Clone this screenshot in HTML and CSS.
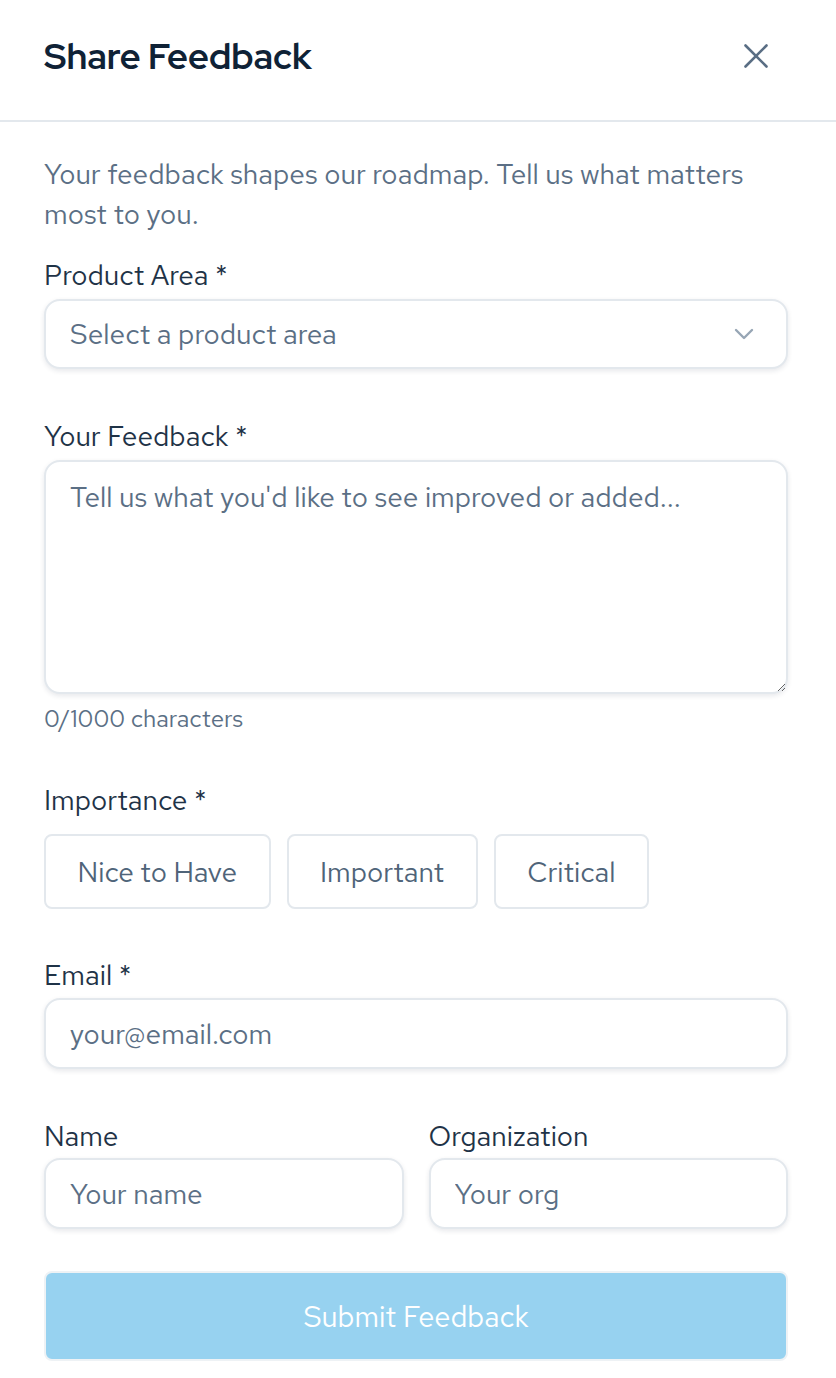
FILE: index.html
```html
<!DOCTYPE html>
<html lang="en">
<head>
<meta charset="utf-8">
<title>Share Feedback</title>
<link rel="stylesheet" href="styles.css">
</head>
<body>
<div class="panel">
  <header class="header">
    <h1 class="title">Share Feedback</h1>
    <button class="close" aria-label="Close">
      <svg width="24" height="24" viewBox="0 0 24 24" fill="none" stroke="currentColor" stroke-width="2.6" stroke-linecap="round"><path d="M1.5 1.5L22.5 22.5M22.5 1.5L1.5 22.5"/></svg>
    </button>
  </header>
  <main class="body">
    <p class="desc">Your feedback shapes our roadmap. Tell us what matters most to you.</p>
    <form class="form">
      <div class="field">
        <label class="label">Product Area *</label>
        <div class="control select">
          <span class="placeholder">Select a product area</span>
          <svg class="chevron" width="20" height="12" viewBox="0 0 20 12" fill="none" stroke="currentColor" stroke-width="2.4" stroke-linecap="round" stroke-linejoin="round"><path d="M2 2L10 10L18 2"/></svg>
        </div>
      </div>
      <div class="field">
        <label class="label">Your Feedback *</label>
        <textarea class="control textarea" placeholder="Tell us what you'd like to see improved or added..."></textarea>
        <div class="counter">0/1000 characters</div>
      </div>
      <div class="field field-importance">
        <label class="label label-gap">Importance *</label>
        <div class="choices">
          <button type="button" class="choice">Nice to Have</button>
          <button type="button" class="choice">Important</button>
          <button type="button" class="choice">Critical</button>
        </div>
      </div>
      <div class="field field-email">
        <label class="label label-email">Email *</label>
        <input class="control input" type="email" placeholder="your@email.com">
      </div>
      <div class="row">
        <div class="field">
          <label class="label label-tight">Name</label>
          <input class="control input" type="text" placeholder="Your name">
        </div>
        <div class="field">
          <label class="label label-tight">Organization</label>
          <input class="control input" type="text" placeholder="Your org">
        </div>
      </div>
      <button type="button" class="submit">Submit Feedback</button>
    </form>
  </main>
</div>
</body>
</html>
```
FILE: styles.css
```css
* { box-sizing: border-box; }
html, body { margin: 0; padding: 0; background: #ffffff; }
body {
  font-family: "Red Hat Text", Inter, "Open Sans", sans-serif;
  color: #1f3347;
}
.panel { width: 836px; }
.header {
  height: 122px;
  border-bottom: 2px solid #e3e8ed;
  display: flex;
  align-items: center;
  justify-content: space-between;
  padding: 0 68px 8px 44px;
}
.title {
  margin: 0;
  font-family: "Red Hat Display", Inter, sans-serif;
  font-size: 36px;
  font-weight: 700;
  color: #0f2236;
}
.close {
  border: 0;
  background: none;
  padding: 0;
  color: #5a6e84;
  display: flex;
}
.body { padding: 32px 48px 0 44px; }
.desc {
  margin: 0 0 23px;
  font-size: 28px;
  line-height: 40px;
  color: #5b6f85;
}
.form { display: flex; flex-direction: column; gap: 49px; }
.field { display: flex; flex-direction: column; }
.field-importance { margin-top: -1px; }
.field-email { margin-top: -1px; }
.label {
  font-size: 28px;
  line-height: 36px;
  margin-bottom: 6px;
  color: #1f3347;
}
.label-gap { margin-bottom: 16px; }
.label-email { margin-bottom: 5px; }
.label-tight { margin-bottom: 4px; }
.control {
  border: 2px solid #e3e8ed;
  border-radius: 16px;
  background: #fff;
  box-shadow: 0 2px 5px rgba(15, 34, 54, 0.1);
  font-family: inherit;
  font-size: 28px;
  color: #1f3347;
}
.control::placeholder { color: #5b6f85; opacity: 1; }
.select {
  height: 70px;
  display: flex;
  align-items: center;
  justify-content: space-between;
  padding: 0 32px 0 24px;
}
.placeholder { color: #5b6f85; }
.chevron { color: #97a6b5; }
.textarea {
  height: 234px;
  padding: 17px 24px;
  line-height: 36px;
  resize: vertical;
  outline: none;
}
.counter {
  margin-top: 10px;
  font-size: 24px;
  line-height: 30px;
  color: #5b6f85;
}
.choices { display: flex; gap: 16px; }
.choice {
  height: 75px;
  padding: 0 31.5px;
  border: 2px solid #e3e8ed;
  border-radius: 8px;
  background: #fff;
  font-family: inherit;
  font-size: 28px;
  color: #4f6479;
}
.input {
  height: 71px;
  padding: 0 24px;
  outline: none;
  width: 100%;
}
.row { display: grid; grid-template-columns: 1fr 1fr; gap: 25px; }
.submit {
  margin-top: -7px;
  height: 90px;
  border: 2px solid #eef2f5;
  border-radius: 8px;
  background: #97d2f0;
  color: #ffffff;
  font-family: inherit;
  font-size: 29px;
}
```
